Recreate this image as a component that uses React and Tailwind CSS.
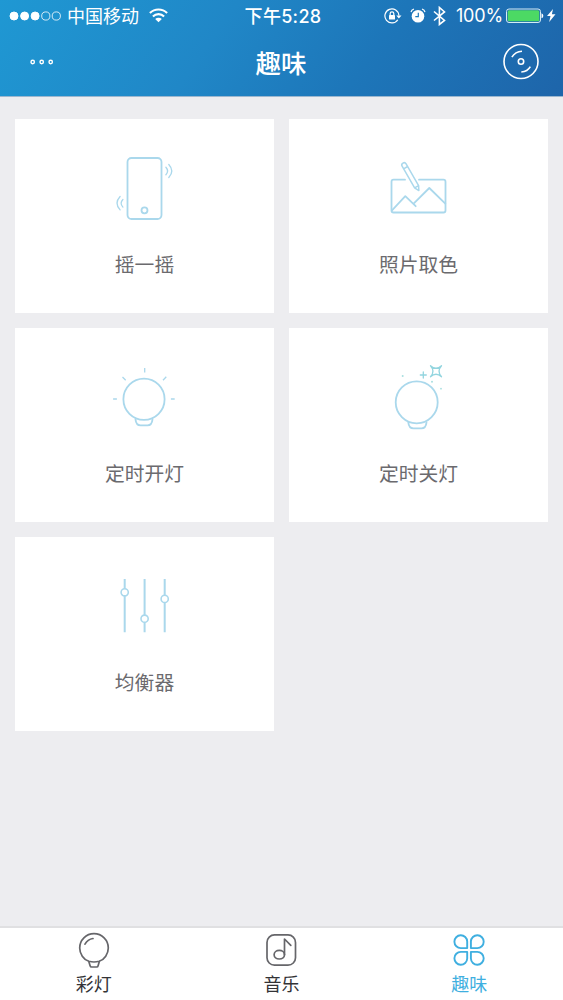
const ICON = {
  width: 80,
  height: 80,
  viewBox: "0.5 0 80 80",
  fill: "none",
  stroke: "#aad8ec",
  strokeWidth: 1.8,
  strokeLinecap: "round",
  strokeLinejoin: "round",
};

function ShakeIcon() {
  return (
    <svg {...ICON}>
      <rect x="23" y="13" width="34" height="61" rx="4" />
      <circle cx="40" cy="65.3" r="3" />
      <g strokeWidth="1.3">
        <path d="M61.4 22.3q3.4 3.7 0 7.4M64.3 19.5q6 6.5 0 13" />
        <path d="M18.4 54.5q-3.6 3.7 0 7.6M15.6 51.5q-6.2 6.7 0 13.4" />
      </g>
    </svg>
  );
}

function PhotoIcon() {
  return (
    <svg {...ICON}>
      <path d="M26.5 34.7H15a2 2 0 0 0-2 2v28.8a2 2 0 0 0 2 2h50a2 2 0 0 0 2-2V36.7a2 2 0 0 0-2-2H40.5" />
      <path d="M13.5 65.3 26.8 51.2l10.4 10M35.6 58.2 50.8 43l16 15.6" />
      <g transform="translate(24.6 18.3) rotate(-30)" strokeWidth="1.5">
        <path d="M-2.3 2a2.3 2.3 0 0 1 4.6 0v25L0 31.5-2.3 27zM-2.3 5h4.6M-2.3 27h4.6" />
      </g>
    </svg>
  );
}

function LightOnIcon() {
  return (
    <svg {...ICON}>
      <circle cx="39.5" cy="45.2" r="20.6" />
      <path d="M31 65.3c.4 3.8 2 6 5 6h7c3 0 4.6-2.2 5-6" />
      <g strokeWidth="1.3" strokeLinecap="butt">
        <path d="M40.2 14v4.4M18 23l3.2 3.2M61.8 22.8l-3.3 3.4M8.6 45h3.8M66.4 45h3.8" />
      </g>
    </svg>
  );
}

function LightOffIcon() {
  return (
    <svg {...ICON}>
      <circle cx="38.2" cy="48.3" r="21" />
      <path d="M29.8 68.4c.4 3.8 2.3 6 5.2 6h8c2.9 0 4.6-2.2 5-6" />
      <g stroke="#93d5df" strokeWidth="1.3">
        <path d="M52 11.800q5.500 5 11 0-5 5.500 0 11-5.500-5-11 0 5-5.500 0-11z" />
        <path d="M44.8 18v6M41.8 21h6" />
      </g>
      <g fill="#a9dfe0" stroke="none">
        <circle cx="24.2" cy="22" r="1" />
        <circle cx="53.5" cy="27.7" r="1" />
        <circle cx="62.5" cy="34.7" r="0.9" />
      </g>
    </svg>
  );
}

function EqualizerIcon() {
  return (
    <svg {...ICON} strokeWidth={2} strokeLinecap="butt">
      <path d="M20.2 16v53.3M40.1 16v53.3M60.2 16v53.3" />
      <g fill="#fff" strokeWidth="1.6">
        <circle cx="20.2" cy="29.3" r="3.6" />
        <circle cx="40.1" cy="55.7" r="3.6" />
        <circle cx="60.2" cy="35.9" r="3.6" />
      </g>
    </svg>
  );
}

const TAB_ICON = {
  width: 38,
  height: 38,
  viewBox: "0 0 38 38",
  fill: "none",
  stroke: "currentColor",
  strokeWidth: 1.7,
  strokeLinecap: "round",
  strokeLinejoin: "round",
};

function BulbTabIcon() {
  return (
    <svg {...TAB_ICON}>
      <path d="M13.8 30.3C8.5 28.5 4.7 22.8 4.7 17a14.3 14.3 0 0 1 28.6 0c0 5.8-3.8 11.5-9.1 13.3q-5.2 1.4-10.4 0z" />
      <path d="M13.8 30.5l1.3 4.3q.3 1.2 1.5 1.2h5q1.2 0 1.5-1.2l1.2-4.3M10 13.2q2.6-5 8-5.7" />
    </svg>
  );
}

function MusicTabIcon() {
  return (
    <svg {...TAB_ICON}>
      <rect x="5" y="3.9" width="28.5" height="30.3" rx="7.5" />
      <ellipse cx="17.3" cy="23.7" rx="5.2" ry="4.3" />
      <path d="M22.5 23.5V8l6.3 6.3" />
    </svg>
  );
}

function FunTabIcon() {
  return (
    <svg {...TAB_ICON} strokeWidth={1.9}>
      <path d="M17.2 17.1V10.5a6.4 6.4 0 1 0-6.4 6.6z" />
      <path d="M20.9 17.1V10.5a6.4 6.4 0 1 1 6.4 6.6z" />
      <path d="M17.2 20.9v6.6a6.4 6.4 0 1 1-6.4-6.6z" />
      <path d="M20.9 20.9v6.6a6.4 6.4 0 1 0 6.4-6.6z" />
    </svg>
  );
}

function StatusBar() {
  return (
    <div className="grid h-[31px] grid-cols-[1fr_auto_1fr] items-center pl-[9px] pr-[6px] text-[18px] leading-[31px]">
      <div className="flex items-center">
        <svg width="53" height="12" viewBox="0 0 53 12" fill="none" stroke="#fff" strokeWidth="1">
          <circle cx="5" cy="6" r="4" fill="#fff" />
          <circle cx="15.6" cy="6" r="4" fill="#fff" />
          <circle cx="26.1" cy="6" r="4" fill="#fff" />
          <circle cx="36.8" cy="6" r="4.1" strokeWidth="0.8" />
          <circle cx="47.3" cy="6" r="4.1" strokeWidth="0.8" />
        </svg>
        <span className="ml-[5px] pt-[2px] leading-[29px]">中国移动</span>
        <svg className="ml-[10px]" width="19" height="15" viewBox="0 0 19 15" fill="none" stroke="#fff" strokeWidth="2.1">
          <path d="M.9 5.1a12.2 12.2 0 0 1 17.2 0M3.9 8.4a8 8 0 0 1 11.2 0" />
          <path d="M9.5 14.3 6.2 11a4.7 4.7 0 0 1 6.6 0z" fill="#fff" stroke="none" />
        </svg>
      </div>
      <span className="pt-[2px] font-medium leading-[29px] tracking-[0.3px]">下午5:28</span>
      <div className="flex items-center justify-end">
        {/* rotation lock */}
        <svg width="18" height="16" viewBox="0 0 18 16" fill="none" stroke="#fff" strokeWidth="1.2">
          <path d="M13.8 11.7A7 7 0 1 1 14.9 7.5" />
          <path d="M12.3 7.4h5.2l-2.6 3.2z" fill="#fff" stroke="none" />
          <rect x="5" y="6.9" width="6" height="4.6" rx="0.6" fill="#fff" stroke="none" />
          <path d="M6.2 7V5.6a1.8 1.8 0 0 1 3.6 0V7" />
        </svg>
        {/* alarm */}
        <svg className="ml-[8px]" width="16" height="16" viewBox="0 0 16 16" fill="none">
          <circle cx="8" cy="8.3" r="6.3" fill="#fff" />
          <path d="M1 4.2q.5-2.4 3-3.2M15 4.2q-.5-2.4-3-3.2" stroke="#fff" strokeWidth="1.2" />
          <path d="M8.3 4.7v4H5.3" stroke="#1e7bbd" strokeWidth="1.2" />
        </svg>
        {/* bluetooth */}
        <svg className="ml-[7px]" width="13" height="20" viewBox="0 0 13 20" fill="none" stroke="#fff" strokeWidth="1.6">
          <path d="M1 5.5l10.5 9L6.4 18.5V1.5l5.1 4.4L1 14.5" />
        </svg>
        <span className="ml-[10px] w-[48px] text-[18px] tracking-[-0.2px]">100%</span>
        <svg className="ml-[2px]" width="38" height="16" viewBox="0 0 38 16">
          <rect x="0.5" y="1" width="34" height="13.5" rx="2.5" fill="none" stroke="#d5ebf5" strokeWidth="1" />
          <rect x="1.7" y="2.2" width="31.6" height="11.1" rx="1.5" fill="#4cd964" />
          <path d="M35.5 5.2q1.8.5 1.8 2.5t-1.8 2.5z" fill="#fff" />
        </svg>
        <svg className="ml-[2px]" width="11" height="14" viewBox="0 0 11 14">
          <path d="M7 0 1 7h3.5L3.2 13 9.5 5.3H5.9z" fill="#fff" />
        </svg>
      </div>
    </div>
  );
}

function Header() {
  return (
    <header className="h-[97px] border-b border-[#9cb7cf] bg-[linear-gradient(125deg,#1f98d3_0%,#2087c7_38%,#1d76b9_65%,#1e65aa_100%)] text-white">
      <StatusBar />
      <div className="grid h-[62px] grid-cols-[1fr_auto_1fr] items-center px-[23px]">
        <svg className="ml-[7px]" width="24" height="8" viewBox="0 0 24 8" fill="none" stroke="#fff" strokeWidth="1.4">
          <circle cx="2.7" cy="4" r="1.7" />
          <circle cx="11.7" cy="4" r="1.7" />
          <circle cx="20.7" cy="4" r="1.7" />
        </svg>
        <h1 className="-ml-px mt-[4px] text-[25.5px] font-medium leading-[36px]">趣味</h1>
        <svg className="justify-self-end" width="38" height="38" viewBox="0 0 38 38" fill="none" stroke="#fff" strokeWidth="1.6">
          <circle cx="19" cy="18.5" r="17" />
          <circle cx="19" cy="18.5" r="2.7" />
          <path d="M9.9 14.2Q13.2 8.6 20 8.3M19.3 29q6.3-.4 9-5.4" />
        </svg>
      </div>
    </header>
  );
}

const features = [
  { label: "摇一摇", Icon: ShakeIcon },
  { label: "照片取色", Icon: PhotoIcon },
  { label: "定时开灯", Icon: LightOnIcon },
  { label: "定时关灯", Icon: LightOffIcon },
  { label: "均衡器", Icon: EqualizerIcon },
];

const tabs = [
  { label: "彩灯", Icon: BulbTabIcon },
  { label: "音乐", Icon: MusicTabIcon },
  { label: "趣味", Icon: FunTabIcon, active: true },
];

export default function App() {
  return (
    <div className="flex h-[1000px] w-[563px] flex-col overflow-hidden bg-[#ededf0] font-['Inter','Noto_Sans_CJK_SC',sans-serif]">
      <Header />

      <main className="grid flex-1 auto-rows-[194px] grid-cols-2 content-start gap-[15px] px-[15px] pt-[22px]">
        {features.map(({ label, Icon }) => (
          <button key={label} className="flex flex-col items-center bg-white pt-[26px]">
            <Icon />
            <span className="mt-[26px] text-[19.8px] leading-[28px] text-[#6b6a6e]">{label}</span>
          </button>
        ))}
      </main>

      <nav className="grid h-[74px] grid-cols-3 border-t-2 border-[#e0e0e2] bg-white">
        {tabs.map(({ label, Icon, active }) => (
          <button
            key={label}
            className={`flex flex-col items-center pt-[3px] ${active ? "text-[#3fafe0]" : "text-[#66666a]"}`}
          >
            <Icon />
            <span className={`mt-[4px] text-[18px] leading-[24px] ${active ? "" : "text-[#333336]"}`}>{label}</span>
          </button>
        ))}
      </nav>
    </div>
  );
}
